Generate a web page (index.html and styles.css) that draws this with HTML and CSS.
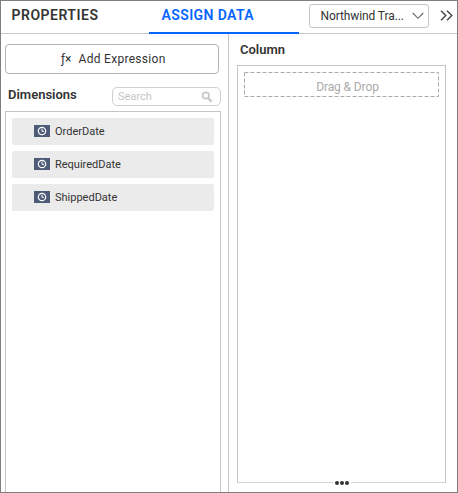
FILE: index.html
```html
<!DOCTYPE html>
<html lang="en">
<head>
<meta charset="utf-8">
<title>Assign Data</title>
<link rel="stylesheet" href="styles.css">
</head>
<body>
<div class="window">
  <header class="header">
    <div class="tab"><span class="tab-properties">PROPERTIES</span></div>
    <div class="tab tab-active"><span class="tab-assign">ASSIGN DATA</span></div>
    <div class="source"><span class="source-name">Northwind Tra...</span>
      <svg class="chevron" width="12" height="8" viewBox="0 0 12 8"><path d="M.8 1 6 6.3 11.2 1" fill="none" stroke="#666" stroke-width="1.1"/></svg>
    </div>
    <svg class="collapse" width="13" height="11" viewBox="0 0 13 11"><path d="M1 .7 5.8 5.5 1 10.3M7 .7l4.8 4.8L7 10.3" fill="none" stroke="#444" stroke-width="1.4"/></svg>
  </header>
  <main class="main">
    <section class="left">
      <div class="add"><span class="fx">ƒ×</span><span class="add-label">Add Expression</span></div>
      <div class="dimensions">
        <span class="title dim-title">Dimensions</span>
        <div class="search"><span>Search</span>
          <svg width="12" height="12" viewBox="0 0 12 12"><circle cx="4.8" cy="4.5" r="3.2" fill="none" stroke="#c8c8c8" stroke-width="1.7"/><path d="m7 7 3.6 3.7" stroke="#c8c8c8" stroke-width="2.5"/></svg>
        </div>
      </div>
      <div class="list">
        <div class="item"><svg class="clock" width="16" height="12" viewBox="0 0 16 12"><path fill="#4d5b76" d="M0 0h16v12H0z"/><circle cx="8" cy="6" r="3.7" fill="none" stroke="#fff" stroke-width="1.2"/><path d="M8 3.7V6.3h2" fill="none" stroke="#fff"/></svg><span>OrderDate</span></div>
        <div class="item"><svg class="clock" width="16" height="12" viewBox="0 0 16 12"><path fill="#4d5b76" d="M0 0h16v12H0z"/><circle cx="8" cy="6" r="3.7" fill="none" stroke="#fff" stroke-width="1.2"/><path d="M8 3.7V6.3h2" fill="none" stroke="#fff"/></svg><span>RequiredDate</span></div>
        <div class="item"><svg class="clock" width="16" height="12" viewBox="0 0 16 12"><path fill="#4d5b76" d="M0 0h16v12H0z"/><circle cx="8" cy="6" r="3.7" fill="none" stroke="#fff" stroke-width="1.2"/><path d="M8 3.7V6.3h2" fill="none" stroke="#fff"/></svg><span>ShippedDate</span></div>
      </div>
    </section>
    <section class="right">
      <div class="title col-title">Column</div>
      <div class="column">
        <div class="drop"><svg class="dash" width="195" height="25"><rect x=".5" y=".5" width="194" height="24" fill="none" stroke="#aaa" stroke-dasharray="4 2"/></svg><span>Drag &amp; Drop</span></div>
        <div class="more"><i></i><i></i><i></i></div>
      </div>
    </section>
  </main>
</div>
</body>
</html>
```
FILE: styles.css
```css
* { box-sizing: border-box; }
body { margin: 0; font-family: Roboto, "Liberation Sans", sans-serif; color: #333; background: #fff; }
svg { display: block; flex: none; }
span { white-space: nowrap; }
.window { width: 458px; height: 493px; border: 1px solid #7f7f7f; display: flex; flex-direction: column; overflow: hidden; }
.header { height: 33px; flex: none; display: flex; border-bottom: 1px solid #c8c8c8; }
.tab { width: 148px; height: 33px; padding-left: 10.5px; font-size: 14px; font-weight: 600; line-height: 29px; }
.tab-active { width: 150px; padding-left: 12.5px; color: #0565ff; border-bottom: 2px solid #0565ff; }
.tab-properties { letter-spacing: .5px; }
.tab-assign { letter-spacing: .4px; }
.source { width: 120px; height: 24px; margin: 3px 0 0 10px; padding: 0 4px 0 10.5px; display: flex; align-items: center; justify-content: space-between; border: 1px solid #c5c5c5; border-radius: 3px; font-size: 12px; }
.source-name { letter-spacing: -.1px; }
.collapse { margin: 9px 0 0 11px; }
.main { flex: 1; min-height: 0; display: flex; }
.left { width: 228px; border-right: 1px solid #c5c5c5; padding: 10px 7px 0 4px; display: flex; flex-direction: column; }
.add { width: 214px; height: 30px; flex: none; padding: 0 0 1px 55px; display: flex; align-items: center; border: 1px solid #b3b3b3; border-radius: 4px; font-size: 12px; }
.fx { width: 17.5px; }
.add-label { letter-spacing: .3px; }
.dimensions { display: flex; margin-top: 13px; height: 19px; flex: none; }
.title { font-size: 13px; font-weight: 600; line-height: 15px; }
.dim-title { width: 107px; padding-left: 3px; }
.search { width: 109px; height: 19px; padding: 0 7px 0 5px; display: flex; align-items: center; justify-content: space-between; border: 1px solid #cfcfcf; border-radius: 5px; font-size: 11px; color: #c6c6c6; }
.list { flex: 1; width: 216px; margin-top: 5px; padding: 6px; border: 1px solid #c5c5c5; border-bottom: 0; display: flex; flex-direction: column; gap: 6px; }
.item { height: 27px; width: 202px; padding-left: 22px; display: flex; align-items: center; gap: 5px; background: #ebebeb; border-radius: 2px; font-size: 11px; }
.clock { margin-top: -1px; }
.right { flex: 1; padding: 8px 11px 9px 8px; display: flex; flex-direction: column; }
.col-title { height: 23px; padding-left: 3px; }
.column { position: relative; flex: 1; width: 209px; padding: 6px; border: 1px solid #c5c5c5; border-bottom-color: #d5d5d5; }
.drop { position: relative; width: 195px; height: 25px; display: flex; align-items: center; justify-content: center; padding: 4px 0 0 12px; color: #aaa; font-size: 12px; letter-spacing: -.1px; }
.dash { position: absolute; inset: 0; }
.more { position: absolute; bottom: -3px; left: 95px; width: 18px; height: 4px; background: #fff; display: flex; justify-content: center; gap: 1px; }
.more i { width: 4px; height: 4px; border-radius: 50%; background: #333; }
```
